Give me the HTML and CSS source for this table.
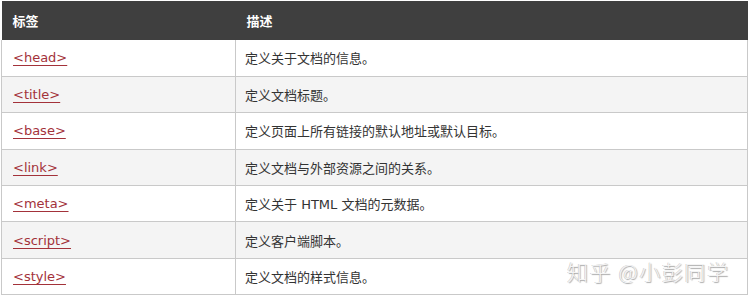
FILE: index.html
```html
<!DOCTYPE html>
<html>
<head>
<meta charset="utf-8">
<link rel="stylesheet" href="styles.css">
</head>
<body>
<div class="page">
<table class="ref">
<thead>
<tr><th class="c1">标签</th><th class="c2">描述</th></tr>
</thead>
<tbody>
<tr><td><a href="#">&lt;head&gt;</a></td><td>定义关于文档的信息。</td></tr>
<tr class="alt"><td><a href="#">&lt;title&gt;</a></td><td>定义文档标题。</td></tr>
<tr><td><a href="#">&lt;base&gt;</a></td><td>定义页面上所有链接的默认地址或默认目标。</td></tr>
<tr class="alt"><td><a href="#">&lt;link&gt;</a></td><td>定义文档与外部资源之间的关系。</td></tr>
<tr><td><a href="#">&lt;meta&gt;</a></td><td>定义关于 HTML 文档的元数据。</td></tr>
<tr class="alt"><td><a href="#">&lt;script&gt;</a></td><td>定义客户端脚本。</td></tr>
<tr><td><a href="#">&lt;style&gt;</a></td><td>定义文档的样式信息。</td></tr>
</tbody>
</table>
<div class="mark">知乎 @小彭同学</div>
</div>
</body>
</html>
```
FILE: styles.css
```css
html, body { margin: 0; padding: 0; background: #fff; }
.page { position: relative; width: 749px; height: 305px; padding: 1px 1px 0 1px; box-sizing: border-box; }
.ref {
  width: 747px;
  border-collapse: collapse;
  font-family: "DejaVu Sans", "Noto Sans CJK SC", sans-serif;
  font-size: 13px;
  color: #333;
}
.ref th {
  background: #3f3f3f;
  color: #fff;
  font-weight: bold;
  text-align: left;
  height: 39px;
  padding: 0 0 0 11px;
  font-family: "Noto Sans CJK SC", sans-serif;
  font-size: 13px;
  box-sizing: border-box;
}
.ref th.c1 { width: 234px; }
.ref td {
  height: 36.4px;
  padding: 0 0 0 11px;
  border: 1px solid #c9c9c9;
  border-top: none;
  box-sizing: border-box;
  vertical-align: middle;
}
.ref td + td { font-family: "DejaVu Sans", "Noto Sans CJK SC", sans-serif; padding-left: 9px; }
.ref tr.alt td { background: #f4f4f4; }
.ref a { color: #a3323a; text-decoration: underline; text-underline-offset: 3px; }
.mark {
  position: absolute;
  left: 567px;
  top: 256px;
  font-family: "Noto Sans CJK SC", sans-serif;
  font-weight: 300;
  font-size: 21px;
  color: #f4f4f4;
  text-shadow: 1px 1px 1px #a8a8a8, -0.5px -0.5px 0 #c4c4c4;
  letter-spacing: 1.6px;
  white-space: nowrap;
}
```
